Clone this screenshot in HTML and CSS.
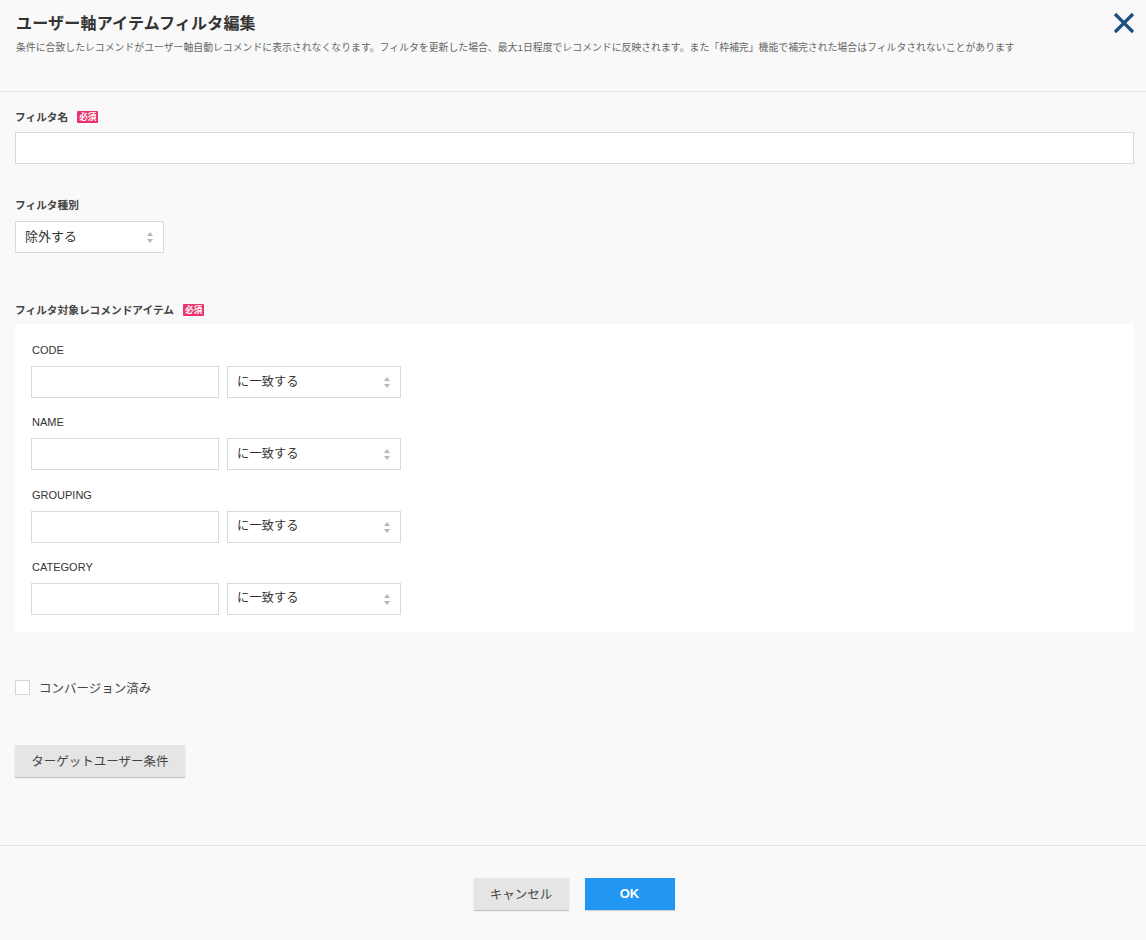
FILE: index.html
```html
<!DOCTYPE html>
<html lang="ja">
<head>
<meta charset="utf-8">
<title>ユーザー軸アイテムフィルタ編集</title>
<link rel="stylesheet" href="styles.css">
</head>
<body>
<div class="modal">
  <header class="header">
    <h1 class="title">ユーザー軸アイテムフィルタ編集</h1>
    <p class="desc">条件に合致したレコメンドがユーザー軸自動レコメンドに表示されなくなります。フィルタを更新した場合、最大1日程度でレコメンドに反映されます。また「枠補完」機能で補完された場合はフィルタされないことがあります</p>
    <button class="close" aria-label="閉じる">
      <svg width="22" height="22" viewBox="0 0 22 22"><path d="M2 2 L20 20 M20 2 L2 20" stroke="#1d4f7f" stroke-width="3.2" stroke-linecap="butt" fill="none"/></svg>
    </button>
  </header>

  <main class="body">
    <div class="field f-name">
      <div class="label">フィルタ名<span class="badge">必須</span></div>
      <input class="input full" type="text">
    </div>

    <div class="field f-type">
      <div class="label">フィルタ種別</div>
      <div class="select small"><span>除外する</span><i class="arrows"></i></div>
    </div>

    <div class="field f-target">
      <div class="label">フィルタ対象レコメンドアイテム<span class="badge">必須</span></div>
      <div class="panel">
        <div class="row">
          <div class="row-label">CODE</div>
          <div class="row-inputs"><input class="input item" type="text"><div class="select match"><span>に一致する</span><i class="arrows"></i></div></div>
        </div>
        <div class="row">
          <div class="row-label">NAME</div>
          <div class="row-inputs"><input class="input item" type="text"><div class="select match"><span>に一致する</span><i class="arrows"></i></div></div>
        </div>
        <div class="row">
          <div class="row-label">GROUPING</div>
          <div class="row-inputs"><input class="input item" type="text"><div class="select match"><span>に一致する</span><i class="arrows"></i></div></div>
        </div>
        <div class="row">
          <div class="row-label">CATEGORY</div>
          <div class="row-inputs"><input class="input item" type="text"><div class="select match"><span>に一致する</span><i class="arrows"></i></div></div>
        </div>
      </div>
    </div>

    <label class="check"><span class="box"></span>コンバージョン済み</label>

    <button class="btn gray target">ターゲットユーザー条件</button>
  </main>

  <footer class="footer">
    <button class="btn gray cancel">キャンセル</button>
    <button class="btn blue ok">OK</button>
  </footer>
</div>
</body>
</html>
```
FILE: styles.css
```css
* { box-sizing: border-box; }
html, body { margin: 0; padding: 0; }
body {
  background: #f9f9f9;
  font-family: "Liberation Sans", "Noto Sans CJK JP", sans-serif;
  color: #333;
  width: 1146px;
  height: 940px;
  overflow: hidden;
}
.modal { width: 1146px; }

.header {
  position: relative;
  padding: 14px 15px 36px 16px;
  border-bottom: 1px solid #e3e3e3;
}
.title {
  margin: 0;
  font-size: 16px;
  line-height: 20px;
  font-weight: bold;
  color: #333;
  letter-spacing: 0.2px;
}
.desc {
  margin: 7px 0 0;
  font-size: 9.87px;
  line-height: 14px;
  color: #666;
  white-space: nowrap;
}
.close {
  position: absolute;
  top: 12px;
  right: 11px;
  padding: 0;
  border: 0;
  background: none;
  width: 22px;
  height: 22px;
}
.close svg { display: block; }

.body { padding: 0 12px 0 15px; }

.label {
  font-size: 10.7px;
  line-height: 14px;
  font-weight: bold;
  color: #444;
  display: flex;
  align-items: center;
}
.badge {
  display: inline-block;
  margin-left: 9px;
  background: #e8336d;
  color: #fff;
  font-size: 8.6px;
  line-height: 12px;
  height: 12px;
  padding: 0 2px;
  border-radius: 1px;
  font-weight: bold;
}

.field.f-name { padding-top: 18px; }
.field.f-name .label { margin-bottom: 8px; }
.field.f-type { padding-top: 34px; }
.field.f-type .label { margin-bottom: 9px; }
.field.f-target { padding-top: 50px; }
.field.f-target .label { margin-bottom: 7px; }

.input {
  display: block;
  height: 32px;
  border: 1px solid #d9d9d9;
  background: #fff;
  margin: 0;
  padding: 0 8px;
  font: inherit;
  outline: none;
}
.input.full { width: 1119px; }
.input.item { width: 188px; }

.select {
  position: relative;
  height: 32px;
  border: 1px solid #d9d9d9;
  background: #fff;
  display: flex;
  align-items: center;
  padding-left: 9px;
  padding-bottom: 3px;
  font-size: 13px;
  color: #333;
}
.select.small { width: 149px; }
.select.match { width: 174px; font-size: 12.3px; }
.arrows {
  position: absolute;
  right: 9px;
  top: 50%;
  width: 7px;
  height: 11px;
  margin-top: -5px;
}
.arrows::before, .arrows::after {
  content: "";
  position: absolute;
  left: 0;
  border-left: 3.5px solid transparent;
  border-right: 3.5px solid transparent;
}
.arrows::before { top: 0; border-bottom: 4px solid #b3b9c1; }
.arrows::after { bottom: 0; border-top: 4px solid #b3b9c1; }

.panel {
  width: 1119px;
  background: #fff;
  padding: 19px 16px 17px 16px;
  box-shadow: 0 0 1px rgba(0,0,0,0.04);
}
.row + .row { margin-top: 17.34px; }
.row-label {
  font-size: 11px;
  line-height: 14px;
  color: #333;
  margin-bottom: 9px;
  padding-left: 1px;
}
.row-inputs { display: flex; gap: 8px; }

.check {
  display: flex;
  align-items: center;
  margin-top: 48px;
  height: 16px;
  font-size: 12.5px;
  color: #444;
}
.box {
  width: 15px;
  height: 15px;
  border: 1px solid #d6d6d6;
  background: #fff;
  margin-right: 9px;
}

.btn {
  border: 0;
  font-family: "Liberation Sans", "Noto Sans CJK JP", sans-serif;
  font-size: 12.5px;
  height: 32px;
  padding: 0;
  cursor: pointer;
}
.btn.gray {
  background: #e5e5e5;
  color: #444;
  box-shadow: 0 1px 1px rgba(0,0,0,0.22);
}
.btn.blue {
  background: #2196f3;
  color: #fff;
  font-weight: bold;
  font-size: 13px;
  box-shadow: 0 1px 1px rgba(0,0,0,0.15);
}
.target {
  display: block;
  margin-top: 49px;
  width: 170px;
}

.footer {
  margin-top: 68px;
  border-top: 1px solid #e3e3e3;
  padding-top: 32px;
  display: flex;
  justify-content: center;
  gap: 16px;
  padding-left: 2px;
}
.cancel { width: 95px; }
.ok { width: 90px; }
```
